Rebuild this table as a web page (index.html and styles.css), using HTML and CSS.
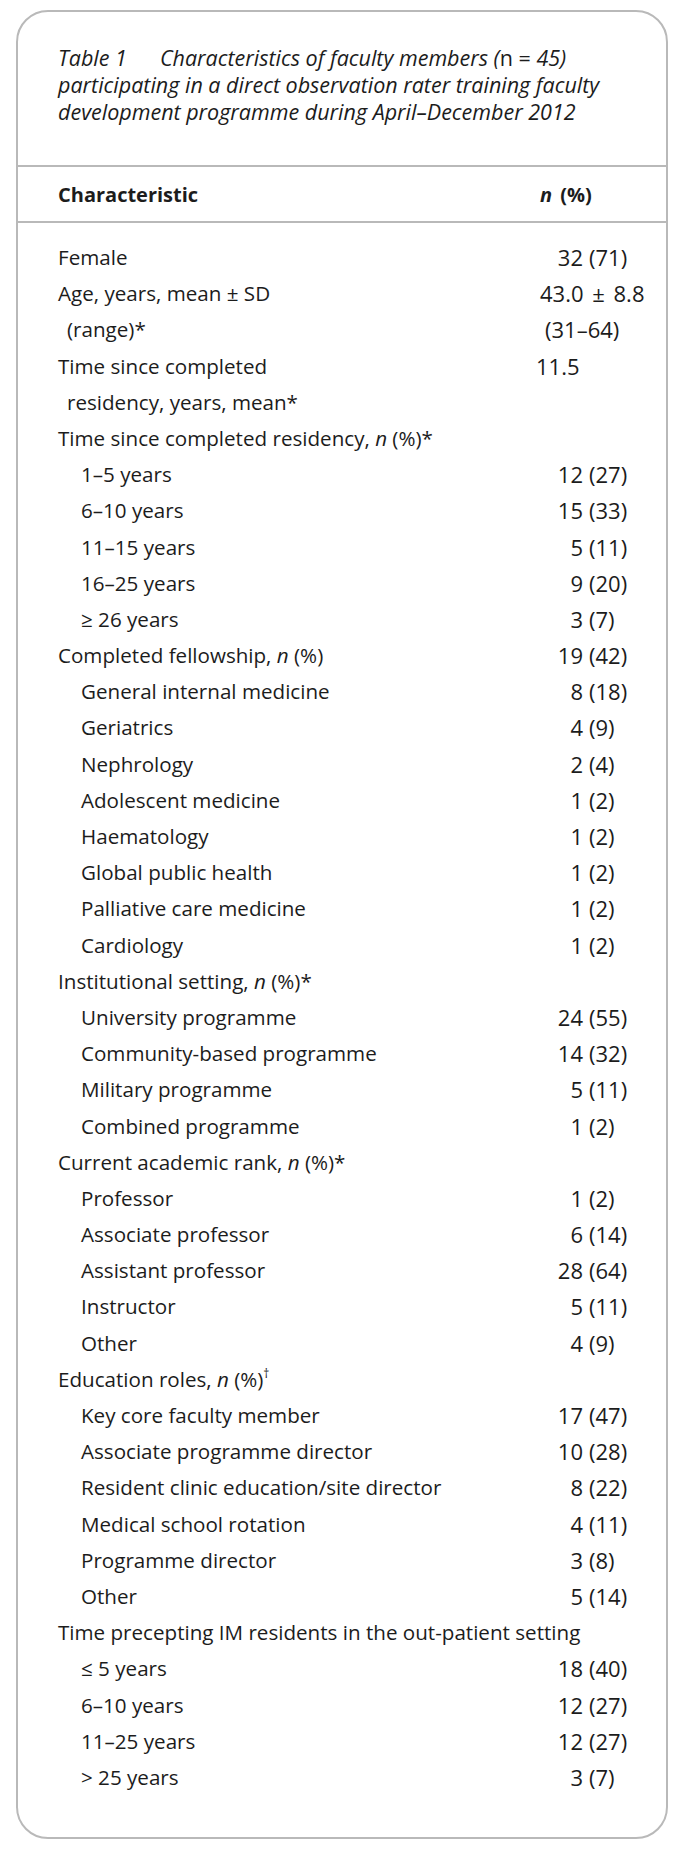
FILE: index.html
```html
<!DOCTYPE html>
<html lang="en">
<head>
<meta charset="utf-8">
<title>Table 1</title>
<link rel="stylesheet" href="styles.css">
</head>
<body>
<div class="card">
  <div class="caption">
    <div class="cline"><span class="tnum">Table 1</span>Characteristics of faculty members (<span class="roman">n =</span> 45)</div>
    <div class="cline">participating in a direct observation rater training faculty</div>
    <div class="cline">development programme during April–December 2012</div>
  </div>
  <div class="head">
    <div class="label">Characteristic</div>
    <div class="val"><i>n</i> (%)</div>
  </div>
  <div class="body">
    <div class="row"><div class="label">Female</div><div class="val"><span class="num">32</span><span class="pct">(71)</span></div></div>
    <div class="row"><div class="label">Age, years, mean ± SD</div><div class="val plain pm">43.0 ± 8.8</div></div>
    <div class="row"><div class="label cont">(range)*</div><div class="val plain cont">(31–64)</div></div>
    <div class="row"><div class="label">Time since completed</div><div class="val plain one">11.5</div></div>
    <div class="row"><div class="label cont">residency, years, mean*</div><div class="val"></div></div>
    <div class="row"><div class="label">Time since completed residency, <i>n</i> (%)*</div><div class="val"></div></div>
    <div class="row"><div class="label sub">1–5 years</div><div class="val"><span class="num">12</span><span class="pct">(27)</span></div></div>
    <div class="row"><div class="label sub">6–10 years</div><div class="val"><span class="num">15</span><span class="pct">(33)</span></div></div>
    <div class="row"><div class="label sub">11–15 years</div><div class="val"><span class="num">5</span><span class="pct">(11)</span></div></div>
    <div class="row"><div class="label sub">16–25 years</div><div class="val"><span class="num">9</span><span class="pct">(20)</span></div></div>
    <div class="row"><div class="label sub">≥ 26 years</div><div class="val"><span class="num">3</span><span class="pct">(7)</span></div></div>
    <div class="row"><div class="label">Completed fellowship, <i>n</i> (%)</div><div class="val"><span class="num">19</span><span class="pct">(42)</span></div></div>
    <div class="row"><div class="label sub">General internal medicine</div><div class="val"><span class="num">8</span><span class="pct">(18)</span></div></div>
    <div class="row"><div class="label sub">Geriatrics</div><div class="val"><span class="num">4</span><span class="pct">(9)</span></div></div>
    <div class="row"><div class="label sub">Nephrology</div><div class="val"><span class="num">2</span><span class="pct">(4)</span></div></div>
    <div class="row"><div class="label sub">Adolescent medicine</div><div class="val"><span class="num">1</span><span class="pct">(2)</span></div></div>
    <div class="row"><div class="label sub">Haematology</div><div class="val"><span class="num">1</span><span class="pct">(2)</span></div></div>
    <div class="row"><div class="label sub">Global public health</div><div class="val"><span class="num">1</span><span class="pct">(2)</span></div></div>
    <div class="row"><div class="label sub">Palliative care medicine</div><div class="val"><span class="num">1</span><span class="pct">(2)</span></div></div>
    <div class="row"><div class="label sub">Cardiology</div><div class="val"><span class="num">1</span><span class="pct">(2)</span></div></div>
    <div class="row"><div class="label">Institutional setting, <i>n</i> (%)*</div><div class="val"></div></div>
    <div class="row"><div class="label sub">University programme</div><div class="val"><span class="num">24</span><span class="pct">(55)</span></div></div>
    <div class="row"><div class="label sub">Community-based programme</div><div class="val"><span class="num">14</span><span class="pct">(32)</span></div></div>
    <div class="row"><div class="label sub">Military programme</div><div class="val"><span class="num">5</span><span class="pct">(11)</span></div></div>
    <div class="row"><div class="label sub">Combined programme</div><div class="val"><span class="num">1</span><span class="pct">(2)</span></div></div>
    <div class="row"><div class="label">Current academic rank, <i>n</i> (%)*</div><div class="val"></div></div>
    <div class="row"><div class="label sub">Professor</div><div class="val"><span class="num">1</span><span class="pct">(2)</span></div></div>
    <div class="row"><div class="label sub">Associate professor</div><div class="val"><span class="num">6</span><span class="pct">(14)</span></div></div>
    <div class="row"><div class="label sub">Assistant professor</div><div class="val"><span class="num">28</span><span class="pct">(64)</span></div></div>
    <div class="row"><div class="label sub">Instructor</div><div class="val"><span class="num">5</span><span class="pct">(11)</span></div></div>
    <div class="row"><div class="label sub">Other</div><div class="val"><span class="num">4</span><span class="pct">(9)</span></div></div>
    <div class="row"><div class="label">Education roles, <i>n</i> (%)<sup>†</sup></div><div class="val"></div></div>
    <div class="row"><div class="label sub">Key core faculty member</div><div class="val"><span class="num">17</span><span class="pct">(47)</span></div></div>
    <div class="row"><div class="label sub">Associate programme director</div><div class="val"><span class="num">10</span><span class="pct">(28)</span></div></div>
    <div class="row"><div class="label sub">Resident clinic education/site director</div><div class="val"><span class="num">8</span><span class="pct">(22)</span></div></div>
    <div class="row"><div class="label sub">Medical school rotation</div><div class="val"><span class="num">4</span><span class="pct">(11)</span></div></div>
    <div class="row"><div class="label sub">Programme director</div><div class="val"><span class="num">3</span><span class="pct">(8)</span></div></div>
    <div class="row"><div class="label sub">Other</div><div class="val"><span class="num">5</span><span class="pct">(14)</span></div></div>
    <div class="row"><div class="label wide">Time precepting IM residents in the out-patient setting</div><div class="val"></div></div>
    <div class="row"><div class="label sub">≤ 5 years</div><div class="val"><span class="num">18</span><span class="pct">(40)</span></div></div>
    <div class="row"><div class="label sub">6–10 years</div><div class="val"><span class="num">12</span><span class="pct">(27)</span></div></div>
    <div class="row"><div class="label sub">11–25 years</div><div class="val"><span class="num">12</span><span class="pct">(27)</span></div></div>
    <div class="row"><div class="label sub">&gt; 25 years</div><div class="val"><span class="num">3</span><span class="pct">(7)</span></div></div>
  </div>
</div>
</body>
</html>
```

FILE: styles.css
```css
html, body {
  margin: 0;
  padding: 0;
  background: #ffffff;
}

body {
  font-family: "Open Sans", "Noto Sans", sans-serif;
  color: #1c1c1c;
}

.card {
  box-sizing: border-box;
  margin: 10px 15px 0 16px;
  height: 1829px;
  border: 2px solid #b9b9b9;
  border-radius: 32px;
  overflow: hidden;
}

.caption {
  padding: 32px 0 40px 40px;
  font-size: 21.5px;
  line-height: 27px;
  font-style: italic;
  height: 81px;
  white-space: nowrap;
}

.caption .tnum {
  margin-right: 33px;
}

.caption .roman {
  font-style: normal;
}

.head {
  display: grid;
  grid-template-columns: 482px 1fr;
  align-items: center;
  height: 54px;
  border-top: 2px solid #b9b9b9;
  border-bottom: 2px solid #b9b9b9;
  padding-left: 40px;
  font-size: 20px;
  font-weight: 700;
  white-space: nowrap;
}

.head .val {
  word-spacing: 3px;
}

.body {
  padding-top: 16px;
  font-size: 20.6px;
}

.row {
  display: grid;
  grid-template-columns: 482px 1fr;
  height: 36.2px;
  line-height: 36px;
  padding-left: 40px;
  white-space: nowrap;
}

.row .val {
  font-size: 22px;
}

.label.sub {
  padding-left: 23px;
}

.label.cont {
  padding-left: 9px;
}

.label.wide {
  overflow: visible;
}

.val.plain.pm {
  word-spacing: 3px;
}

.val.plain.one {
  margin-left: -4px;
}

.val.plain.cont {
  padding-left: 5px;
}

.num {
  display: inline-block;
  width: 43px;
  text-align: right;
}

.pct {
  margin-left: 6px;
}

sup {
  font-size: 12px;
  line-height: 0;
  vertical-align: 9px;
}
```
